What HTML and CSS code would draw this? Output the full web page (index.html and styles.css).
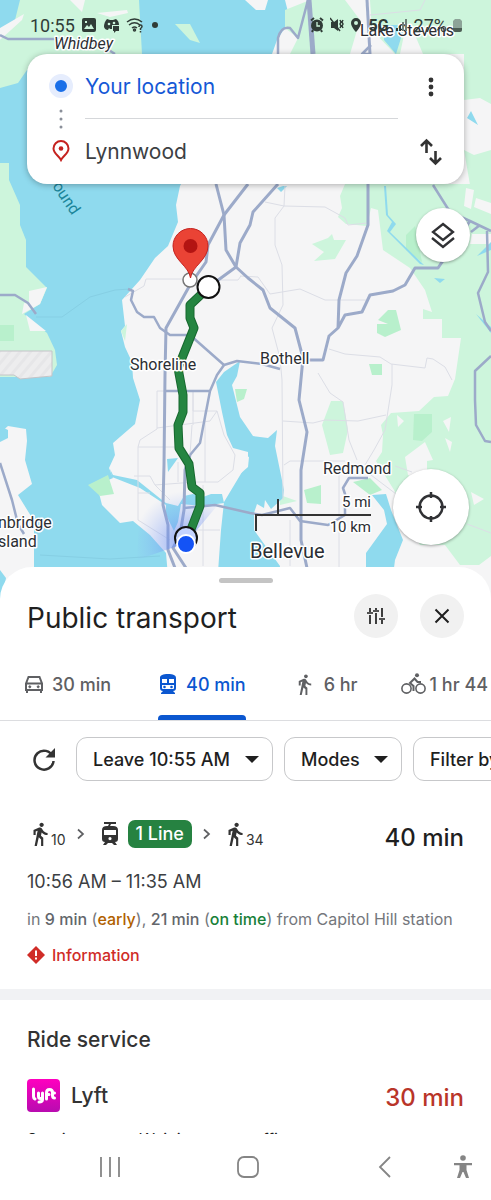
FILE: index.html
```html
<!DOCTYPE html>
<html lang="en">
<head>
  <meta charset="UTF-8" />
  <meta name="viewport" content="width=device-width, initial-scale=1" />
  <title>Directions to Lynnwood</title>
  <link rel="stylesheet" href="styles.css">
</head>
<body>

  <!-- Icons used more than once -->
  <svg class="sprite" aria-hidden="true">
    <symbol id="walk" viewBox="0 0 24 24">
      <path fill="currentColor" d="M13.500 5.500c1.100 0 2-.9 2-2s-.9-2-2-2-2 .9-2 2 .9 2 2 2zM9.800 8.900L7 23h2.100l1.800-8 2.100 2v6h2v-7.500l-2.100-2 .6-3C14.800 12 16.800 13 19 13v-2c-1.900 0-3.500-1-4.300-2.400l-1-1.600c-.4-.6-1-1-1.700-1-.3 0-.5.1-.8.1L6 8.300V13h2V9.600l1.800-.7"/>
    </symbol>
    <symbol id="chevron" viewBox="0 0 10 14">
      <path fill="none" stroke="#5f6063" stroke-width="1.700" d="M2 2.500l5 4.500-5 4.500"/>
    </symbol>
  </svg>

  <div class="app">

    <!-- Map -->
    <section class="map">
      <svg class="map-canvas" viewBox="0 0 491 600" preserveAspectRatio="xMidYMin slice" role="img" aria-label="Map">
        <defs>
          <radialGradient id="beam" gradientUnits="userSpaceOnUse" cx="186" cy="543" r="52">
            <stop offset="0" stop-color="#5b82f2" stop-opacity=".7"/>
            <stop offset="1" stop-color="#8fabf7" stop-opacity="0"/>
          </radialGradient>
          <pattern id="hatch" width="8" height="8" patternUnits="userSpaceOnUse" patternTransform="rotate(40)">
            <rect width="8" height="8" fill="#ededee"/>
            <rect width="3" height="8" fill="#e6e6e8"/>
          </pattern>
        </defs>
        <rect width="491" height="600" fill="#8fdaee"/>

        <!-- Land -->
        <g fill="#f5f5f6">
          <path d="M245 0H268L265 10H256Z"/>
          <path d="M0 433L8 426 26 429 27 441 25 460 32 484 18 495 34 521 34 567 20 575 0 600Z"/>
          <path d="M285 0L290 20 277 40 272 54 250 90 200 150 180 186 176 205 178 222 168 246 155 258 140 280 122 300 125 326 121 331 125 347 132 362 133 378 140 400 135 424 113 443 115 455 109 468 113 478 97 485 102 505 120 523 133 521 150 535 166 553 170 600H491V0Z"/>
        </g>
        <path fill="#8fdaee" d="M0 426L8 430 8 438 0 442ZM110 469L113 475 137 480 162 500 166 503 178 506 184 496 193 494 203 497 211 494 222 494 224 503 203 506 181 504 178 522 174 531 166 515 166 505 140 488 112 477ZM167 459L178 458 168 472Z"/>

        <!-- Parks -->
        <g fill="#cdf5dc">
          <path d="M20 0H139L142 54 100 75 27 70 18 83 0 88V40L14 24Z"/>
          <path d="M0 163H9V180L20 205 20 225 26 240 26 267 47 288 40 304 24 314 47 333 55 350 57 365 50 377H0Z"/>
          <path d="M175 24L190 24 200 43 190 40Z"/>
          <path d="M285 10L310 0H345L360 20 350 54H290L298 38 285 28Z"/>
          <path d="M370 0H491V54H395L372 30Z"/>
          <path d="M464 54H491V185H470L464 150Z"/>
          <path d="M332 184L345 184 340 196 342 208 338 217 346 224 367 226 371 208 378 210 383 250 410 268 425 290 432 312 423 309 423 319 442 319 442 338 461 338 455 379 448 396 434 397 419 411 391 413 381 425 383 435 382 452 376 461 394 490 420 545 445 545 460 565H479L491 556V184Z"/>
          <path d="M312 244L328 238 332 234 334 240 346 240 335 259 314 261 324 252Z"/>
          <path d="M331 401H343L348 430 343 453 330 455 322 425Z"/>
          <path d="M280 495L297 501 280 505ZM121 331L127 324 125 341Z"/>
        </g>
        <g fill="#b8f0cc">
          <path d="M378 320L388 310 396 310 401 330 385 337 377 333V324H388Z"/>
          <path d="M369 364H382V375H372ZM414 414H432V432L422 441 413 440ZM304 490L321 485V504L307 503ZM353 482L370 478 382 490 370 495ZM235 389H247L244 399 237 402ZM88 485L108 475 114 494 100 496ZM406 235L415 226 422 262 406 250ZM0 325H14V341H0Z"/>
        </g>
        <g fill="#f5f5f6">
          <path d="M97 13L127 10 128 13 110 17ZM70 0H85L82 12ZM0 28L24 14 22 20 0 40ZM29 291L47 287 40 304 22 314 24 303 29 304ZM26 315L46 331 30 331Z"/>
          <path d="M466 188L474 190 471 209 464 206ZM476 198L491 203V214L474 207ZM472 234H491V244H470Z"/>
          <path d="M464 100L480 98 491 104V150L474 155 464 150ZM404 35L415 35 423 54H400Z"/>
          <path d="M397 415L404 421 398 427ZM443 421L451 417 449 432ZM405 457L425 442 433 460 427 461V485L408 475ZM445 438L452 442 450 452ZM471 492L484 499 474 505ZM427 368L453 374 450 382Z"/>
        </g>

        <!-- Lakes -->
        <g fill="#8fdaee">
          <path d="M224 372L240 361 237 376 232 385 240 417 253 436 268 438 277 430 275 446 284 490 283 498 271 509 265 500 264 508 257 504 254 513 254 530 280 566 276 600H216L221 530 224 502 248 462 248 452 233 448 227 435 222 412 216 382Z"/>
          <path d="M366 553L387 524 384 510 372 495 386 494 391 510 403 540 395 560 390 600H366Z"/>
          <path d="M384 25H405L396 54 384 40ZM283 186H287L281 192 277 188Z"/>
          <path d="M384 186H386L388 215 396 224 390 232 424 265 420 264 387 231 392 222 386 215Z"/>
          <path d="M434 278L445 279 440 283ZM477 256L491 242V250ZM476 314L491 327V333ZM467 118L471 111 478 125Z"/>
          <path d="M0 570L6 578 2 600H0Z"/>
        </g>
        <path fill="#f5f5f6" d="M240 453L249 457 248 467 240 474Z"/>

        <!-- Airfield -->
        <path fill="url(#hatch)" stroke="#c4c4c8" d="M-2 351H52V376L20 379 14 375-2 375Z"/>

        <!-- Minor roads -->
        <g fill="none" stroke="#dcdee6">
          <path d="M125 297L144 286 146 279H184M200 280H238L241 276"/>
          <path stroke="#86cfe4" d="M36 317H62L90 297 115 290 130 289M40 555L110 559 160 556"/>
          <path d="M285 186L284 206 275 218 275 245 282 265 283 305 272 328 280 358 282 380 283 500M265 202L284 206 325 207 345 218 348 225 367 223M240 276L258 277 270 294 300 289 325 300H366"/>
          <path d="M329 349L345 354 380 357 391 364 425 368 427 358 433 359 445 367 452 380M392 364V385L385 430 374 450 365 465M283 421L313 423 325 420 358 421 386 415M318 373L330 393 343 402 349 440 357 460M284 465L290 461H345M339 470V568M290 520V566M395 466L412 472M371 475L400 497M467 524L491 533"/>
          <path d="M157 391H193V425M157 391V429L140 440 138 447V520L170 540M157 428L210 421 217 411H193V391M138 447H178M217 411L224 435 235 455 233 470 218 482H195L155 485 150 476H134M178 462V482M155 485L170 500M138 493L150 493M192 425L190 455M205 410V482M184 530H220M203 485V566"/>
          <path d="M370 15L420 10 425 0"/>
        </g>

        <!-- Highways -->
        <g fill="none" stroke="#9caac9" stroke-width="2.500" stroke-linejoin="round">
          <path d="M0 35L8 39 60 39 98 43 115 54M0 295H15L28 303 36 314M0 463L12 500 18 524 24 534"/>
          <path d="M308 0L298 38 290 28Q281 26 278 38V54M370 54L362 54 371 45"/>
          <path d="M128 289L133 291 131 300 137 312 144 317H154L160 328 170 335H190L224 365 237 361 262 364 280 369"/>
          <path d="M166 391H210M224 365L217 375 210 391 200 443 190 455"/>
          <path d="M184 508L215 505 250 513 262 515 290 508 300 521 328 525 345 515V494L343 488 349 478H368"/>
          <path d="M433 185L450 212 470 221 491 231M487 231L488 272 478 293 485 322 491 331M491 356L475 371V400L476 425 485 441 491 442M471 232L480 225"/>
        </g>
        <g fill="none" stroke="#9caac9" stroke-width="3" stroke-linejoin="round">
          <path stroke-width="5" d="M309 0L313 54"/>
          <path d="M367 0L370 54"/>
          <path d="M216 184L224 215 226 250 236 267 248 278 263 290 270 308 295 328 303 358 299 400 307 432 301 470V540L307 568"/>
          <path d="M248 184L224 215 208 245 206 262 190 285 166 328 165 375 164 465 163 505 168 525V550L175 568M278 184L253 212 250 225 240 243 236 267 210 286"/>
          <path d="M368 184V225L357 256 346 273 339 300 338 328 329 336 323 360H303M338 328L345 315 362 312 370 295 393 291 405 285 415 268H438L470 221"/>
          <path d="M190 455L185 470 184 510 180 535 173 548 186 568"/>
        </g>

        <!-- Route -->
        <path fill="url(#beam)" d="M186 543L137 560 140 500 170 485 222 500Z"/>
        <g fill="none" stroke-linejoin="round">
          <path stroke="#17682f" stroke-width="9" d="M208 288L190 305V318L194 328 178 368 183 395V412L178 425 179 448 189 464 192 487 200 493V506L190 532"/>
          <path stroke="#258541" stroke-width="7" d="M208 288L190 305V318L194 328 178 368 183 395V412L178 425 179 448 189 464 192 487 200 493V506L190 532"/>
        </g>
        <circle cx="186" cy="538" r="11" fill="#c5d4ff" stroke="#111" stroke-width="2"/>
        <circle cx="186" cy="544" r="9" fill="#1453f5" stroke="#fff" stroke-width="2"/>
        <circle cx="190" cy="280" r="7" fill="#fff" stroke="#777" stroke-width="1.500"/>
        <circle cx="208.500" cy="287" r="11" fill="#fff" stroke="#111" stroke-width="2"/>
        <path fill="#ea4335" stroke="#c5221f" d="M190.500 278C189 266 173 260 173 246a17.500 17.500 0 0 1 35 0C208 260 192 266 190.500 278Z"/>
        <circle cx="190.500" cy="246" r="7" fill="#b31412"/>

        <g class="map-labels">
          <text class="label-italic" x="54" y="49">Whidbey</text>
          <text x="360" y="36">Lake Stevens</text>
          <text x="130" y="370">Shoreline</text>
          <text x="260" y="364">Bothell</text>
          <text x="323" y="474">Redmond</text>
          <text class="label-city" x="250" y="558">Bellevue</text>
          <text x="-2" y="528">nbridge</text>
          <text x="-2" y="547">sland</text>
          <text class="label-scale" x="371" y="507" text-anchor="end">5 mi</text>
          <text class="label-scale" x="371" y="532" text-anchor="end">10 km</text>
        </g>
        <text class="label-water" transform="translate(52 186) rotate(56)">ound</text>

        <!-- Scale -->
        <path fill="none" stroke="#333" stroke-width="2" d="M256 531V515H371M278 515V499"/>
      </svg>

      <div class="status">
        <div class="status-group">
          <span>10:55</span>
          <svg width="16" height="16" viewBox="0 0 16 16"><path fill="#303c37" fill-rule="evenodd" d="M3 1h10a2 2 0 0 1 2 2v10a2 2 0 0 1-2 2H3a2 2 0 0 1-2-2V3a2 2 0 0 1 2-2ZM3 12h10L10 7 8 10 6 8ZM4 4v2h2V4Z"/></svg>
          <svg width="17" height="16" viewBox="0 0 17 16"><path fill="#303c37" d="M4 2l3 1h3l3-1q3 2 3 6H9v4H7l-1-1-1 2q-3 0-4-3Q1 5 4 2ZM10 9h6v5h-3l-2 2v-2h-1Z"/><circle cx="6" cy="7" r="1.300" fill="#cdf5dc"/><circle cx="11" cy="6" r="1.300" fill="#cdf5dc"/></svg>
          <svg width="18" height="16" viewBox="0 0 18 16" fill="none" stroke="#303c37" stroke-width="1.500"><path d="M1 5Q8.500-1 16 5M3 8q5.500-4.500 11 0M6 11q2.500-2 5 0M13 10q0-2 1.500-2T16 9.500q0 1-1.500 2V13M14.500 14v1.500"/><circle cx="8.500" cy="13" r="1"/></svg>
          <span class="status-dot"></span>
        </div>
        <div class="status-group">
          <svg width="14" height="16" viewBox="0 0 14 16"><circle cx="7" cy="8.500" r="6" fill="#303c37"/><path stroke="#303c37" stroke-width="2" d="M1 3.500L4 1M13 3.500L10 1M3 13l-1 2M11 13l1 2"/><path fill="none" stroke="#cdf5dc" stroke-width="1.300" d="M7 5v4h3"/></svg>
          <svg width="14" height="16" viewBox="0 0 14 16"><path fill="#303c37" d="M1 5h3l4-3v12l-4-3H1Z"/><path fill="none" stroke="#303c37" stroke-width="1.500" d="M0 1l10 13M10 3l1 2-1 2 1 2-1 2M13 3l-1 2 1 2-1 2 1 2"/></svg>
          <svg width="12" height="16" viewBox="0 0 12 16"><path fill="#303c37" fill-rule="evenodd" d="M6 1a5 5 0 0 1 5 5c0 4-5 9-5 9S1 10 1 6a5 5 0 0 1 5-5Zm0 3a2 2 0 1 0 0 4 2 2 0 0 0 0-4Z"/></svg>
          <span class="network">5G</span>
          <svg width="13" height="14" viewBox="0 0 13 14"><path stroke="#303c37" stroke-width="2" d="M2 10v3M5 8v5"/><path stroke="#6f8078" stroke-width="2" d="M8 4v9M11 1v12"/></svg>
          <span>27%</span>
          <svg width="9" height="14" viewBox="0 0 9 14"><path fill="#8da398" d="M2 1h5l2 2v8H0V3Z"/><path fill="#4c5d54" d="M0 10h9v2q0 2-2 2H2q-2 0-2-2Z"/></svg>
        </div>
      </div>

      <form class="search">
        <div class="search-marks">
          <span class="origin-mark"></span>
          <svg width="4" height="20" viewBox="0 0 4 20" fill="#8a8f99"><circle cx="2" cy="2" r="1.500"/><circle cx="2" cy="10" r="1.500"/><circle cx="2" cy="18" r="1.500"/></svg>
          <svg width="18" height="22" viewBox="0 0 18 22"><path fill="none" stroke="#c5221f" stroke-width="2" d="M9 20C7 16 1.500 13.500 1.500 8.500a7.500 7.500 0 0 1 15 0C16.500 13.500 11 16 9 20Z"/><circle cx="9" cy="8.500" r="2.300" fill="#c5221f"/></svg>
        </div>
        <div class="search-fields">
          <input class="origin" type="text" value="Your location" aria-label="Starting point">
          <hr>
          <input type="text" value="Lynnwood" aria-label="Destination">
        </div>
        <div class="search-actions">
          <button type="button" aria-label="More options">
            <svg width="24" height="24" viewBox="0 0 24 24" fill="#333"><circle cx="12" cy="5" r="2.400"/><circle cx="12" cy="12" r="2.400"/><circle cx="12" cy="19" r="2.400"/></svg>
          </button>
          <button type="button" aria-label="Swap start and destination">
            <svg width="24" height="28" viewBox="0 0 24 28" fill="none" stroke="#333" stroke-width="2.600"><path d="M7.500 15V3M2 8l5.500-5.500L13 8M16.500 13v12M11 20l5.500 5.500L22 20"/></svg>
          </button>
        </div>
      </form>

      <button class="round layers" type="button" aria-label="Layers">
        <svg width="26" height="28" viewBox="0 0 26 28" fill="none" stroke="#303134" stroke-width="2.300"><path d="M13 3l10 8-10 8-10-8ZM2 17l11 9 11-9"/></svg>
      </button>
      <button class="round locate" type="button" aria-label="Centre on my location">
        <svg width="32" height="32" viewBox="0 0 32 32" fill="none" stroke="#303134" stroke-width="2.500"><circle cx="16" cy="16" r="11.500"/><path d="M16 1v6M16 25v6M1 16h6M25 16h6"/></svg>
      </button>
    </section>

    <!-- Bottom sheet -->
    <main class="sheet">
      <div class="handle"></div>
      <header class="sheet-header">
        <h1>Public transport</h1>
        <button class="chip-round" type="button" aria-label="Route options">
          <svg width="20" height="20" viewBox="0 0 20 20" fill="none" stroke="#1f1f1f" stroke-width="1.700"><path d="M4 2v4M1 7h6M4 9v9M10 2v2M7 5h6M10 7v11M16 2v9M13 13h6M16 14v4"/></svg>
        </button>
        <button class="chip-round" type="button" aria-label="Close">
          <svg width="18" height="18" viewBox="0 0 18 18" fill="none" stroke="#1f1f1f" stroke-width="2"><path d="M2.500 2.500l13 13M15.500 2.500l-13 13"/></svg>
        </button>
      </header>

      <nav class="tabs">
        <button type="button">
          <svg width="20" height="20" viewBox="0 0 20 20" fill="none" stroke="currentColor" stroke-width="2"><path d="M2 9.500L4.500 3h11L18 9.500V16H2ZM2 9.500h16M3 16v3M17 16v3"/><circle cx="5.800" cy="12.800" r="1" fill="currentColor" stroke-width="1"/><circle cx="14.200" cy="12.800" r="1" fill="currentColor" stroke-width="1"/></svg>
          30 min
        </button>
        <button class="active" type="button">
          <svg width="20" height="20" viewBox="0 0 20 20"><path fill="currentColor" fill-rule="evenodd" d="M10 0c5 0 8 1 8 4v10q0 3-3 3l2 2v1H3v-1l2-2q-3 0-3-3V4c0-3 3-4 8-4ZM4 5v4h5V5Zm7 0v4h5V5ZM4 11v3q0 1 1 1h10q1 0 1-1v-3Z"/><circle cx="6.500" cy="13" r="1.300" fill="currentColor"/><circle cx="13.500" cy="13" r="1.300" fill="currentColor"/></svg>
          40 min
        </button>
        <button type="button">
          <svg width="23" height="23"><use href="#walk"/></svg>
          6 hr
        </button>
        <button class="bike" type="button">
          <svg width="25" height="22" viewBox="0 0 25 22" fill="none" stroke="currentColor" stroke-width="1.600"><circle cx="5.500" cy="15.500" r="4.600"/><circle cx="19.500" cy="15.500" r="4.600"/><circle cx="16" cy="2.200" r="2" fill="currentColor" stroke="none"/><path stroke-width="2" d="M12.500 18v-5L9 10l4.500-4.500 3 3.500H20"/></svg>
          1 hr 44
        </button>
      </nav>

      <div class="filters">
        <button class="refresh" type="button" aria-label="Refresh">
          <svg width="24" height="24" viewBox="0 0 24 24"><path fill="none" stroke="#333" stroke-width="2.500" d="M20.800 9.500A9.500 9.500 0 1 0 21.500 14"/><path fill="#333" d="M23 1v9.500h-9.500Z"/></svg>
        </button>
        <label class="filter"><select aria-label="Departure time"><option>Leave 10:55 AM</option></select></label>
        <label class="filter"><select aria-label="Modes"><option>Modes</option></select></label>
        <label class="filter"><select aria-label="Filter by"><option>Filter by</option></select></label>
      </div>

      <article class="trip">
        <div class="trip-top">
          <div class="legs">
            <span class="leg"><svg width="26" height="26"><use href="#walk"/></svg><small>10</small></span>
            <svg width="10" height="14"><use href="#chevron"/></svg>
            <svg class="tram" width="20" height="26" viewBox="0 0 20 26"><path fill="#333" fill-rule="evenodd" d="M4 1h12v2h-5l-1 2h3q5 0 5 4v9q0 3-3 3l2 3h-3l-2-2H8l-2 2H3l2-3q-3 0-3-3V9q0-4 5-4h1l1-2H4ZM4 9v5h12V9Zm6 7a1.600 1.600 0 1 0 0 3.200 1.600 1.600 0 0 0 0-3.200Z"/></svg>
            <span class="line">1 Line</span>
            <svg width="10" height="14"><use href="#chevron"/></svg>
            <span class="leg"><svg width="26" height="26"><use href="#walk"/></svg><small>34</small></span>
          </div>
          <strong class="duration">40 min</strong>
        </div>
        <p class="times">10:56 AM – 11:35 AM</p>
        <p class="departures">in <b>9 min</b> (<b class="early">early</b>), <b>21 min</b> (<b class="on-time">on time</b>) from Capitol Hill station</p>
        <a class="info" href="#">
          <svg width="18" height="18" viewBox="0 0 18 18"><path fill="#d02c27" d="M9 0l9 9-9 9-9-9Z"/><path stroke="#fff" stroke-width="2" d="M9 4.500v5.500M9 11.500v2"/></svg>
          Information
        </a>
      </article>

      <section class="rides">
        <h2>Ride service</h2>
        <div class="ride">
          <svg width="33" height="33" viewBox="0 0 33 33">
            <defs><linearGradient id="pink" x2="0" y2="1"><stop stop-color="#ff00bf"/><stop offset="1" stop-color="#b80bb0"/></linearGradient></defs>
            <rect width="33" height="33" rx="4" fill="url(#pink)"/>
            <g fill="none" stroke="#fff" stroke-width="3" stroke-linecap="round"><path d="M6.500 10v7q0 2.500 1.500 3M11.500 14v3.500q0 2 2 2t2-2V14M15.500 17v3.500q0 2.500-3.500 2.500M19.500 20v-6q0-3.500 3-3.500t3 3v3q0 2.500 2 2.500M20 15.500h2M25.500 14h2"/></g>
          </svg>
          <span class="ride-name">Lyft</span>
          <strong class="duration late">30 min</strong>
        </div>
        <p class="ride-note">Service zone · Wait in or near office</p>
      </section>
    </main>

    <!-- System navigation -->
    <footer class="system-nav">
      <button type="button" aria-label="Recent apps"><svg width="24" height="24" viewBox="0 0 24 24"><path stroke="#858585" stroke-width="1.800" d="M3 2v20M12 2v20M21 2v20"/></svg></button>
      <button type="button" aria-label="Home"><svg width="24" height="24" viewBox="0 0 24 24"><rect x="2" y="2" width="20" height="20" rx="6" fill="none" stroke="#858585" stroke-width="1.800"/></svg></button>
      <button type="button" aria-label="Back"><svg width="24" height="24" viewBox="0 0 24 24"><path fill="none" stroke="#858585" stroke-width="1.800" d="M17 2L7 12l10 10"/></svg></button>
      <button class="access" type="button" aria-label="Accessibility"><svg width="24" height="24" viewBox="0 0 24 24" fill="#858585"><circle cx="12" cy="3" r="2.800"/><path d="M3 8h18v2.200h-5.500V15L18 23h-3l-2.500-6h-1L9 23H6l2.500-8v-4.800H3Z"/></svg></button>
    </footer>
  </div>

</body>
</html>
```
FILE: styles.css
```css
* {
  box-sizing: border-box;
}

body {
  margin: 0;
  font-family: Inter, "Open Sans", sans-serif;
  color: #1f1f1f;
  background-color: #fff;
}

button,
input,
select {
  font: inherit;
  color: inherit;
  background: none;
  border: none;
  padding: 0;
  margin: 0;
}

button {
  display: flex;
  align-items: center;
  justify-content: center;
  cursor: pointer;
}

svg {
  display: block;
  flex-shrink: 0;
}

.sprite {
  position: absolute;
  width: 0;
  height: 0;
}

.app {
  display: flex;
  flex-direction: column;
  height: 100vh;
  overflow: hidden;
}

/* Map */
.map {
  position: relative;
  flex: 0 0 50vh;
  overflow: hidden;
}

.map-canvas {
  position: absolute;
  inset: 0;
  width: 100%;
  height: 100%;
}

.map-labels,
.label-water {
  font-family: Roboto, sans-serif;
  font-size: 16px;
}

.map-labels {
  fill: #2b2e33;
  stroke: #fff;
  stroke-width: 3px;
  stroke-linejoin: round;
  paint-order: stroke;
}

.label-italic {
  font-style: italic;
}

.label-city {
  font-size: 20px;
}

.label-scale {
  font-size: 15px;
}

.label-water {
  fill: #1b8599;
}

.status {
  position: relative;
  display: flex;
  justify-content: space-between;
  align-items: center;
  height: 54px;
  padding: 0 29px 4px 30px;
  font-family: Roboto, sans-serif;
  font-size: 18px;
  color: #303c37;
}

.status-group {
  display: flex;
  align-items: center;
  gap: 6px;
}

.status-dot {
  width: 6px;
  height: 6px;
  margin-left: 2px;
  border-radius: 50%;
  background-color: #303c37;
}

.network {
  font-size: 16px;
  font-weight: 700;
}

.search {
  position: relative;
  display: flex;
  margin: 0 27px;
  height: 130px;
  border-radius: 20px;
  background-color: #fff;
  box-shadow: 0 1px 6px rgba(0, 0, 0, 0.3);
}

.search-marks {
  display: flex;
  flex-direction: column;
  align-items: center;
  justify-content: space-between;
  width: 24px;
  margin-left: 22px;
  padding: 20px 0 22px;
}

.origin-mark {
  width: 24px;
  height: 24px;
  border: 6px solid #e6edfd;
  border-radius: 50%;
  background-color: #1a6fe8;
}

.search-fields {
  display: flex;
  flex-direction: column;
  flex: 1;
  min-width: 0;
  margin-left: 12px;
  font-size: 21px;
  color: #3c4043;
}

.search-fields input {
  width: 100%;
  height: 64px;
}

.search-fields .origin {
  color: #1558d6;
}

.search-fields hr {
  width: 100%;
  margin: 0;
  border: none;
  border-top: 1px solid #d5d7da;
}

.search-actions {
  display: flex;
  flex-direction: column;
  width: 66px;
}

.search-actions button {
  flex: 1;
}

.round {
  position: absolute;
  border-radius: 50%;
  background-color: #fff;
  box-shadow: 0 1px 3px rgba(0, 0, 0, 0.35);
}

.layers {
  top: 208px;
  right: 21px;
  width: 54px;
  height: 54px;
}

.locate {
  right: 22px;
  bottom: 55px;
  width: 76px;
  height: 76px;
}

/* Sheet */
.sheet {
  position: relative;
  flex: 1;
  min-height: 0;
  margin-top: -33px;
  overflow: hidden;
  border-radius: 32px 32px 0 0;
  background-color: #fff;
}

.handle {
  width: 54px;
  height: 5px;
  margin: 11px auto;
  border-radius: 3px;
  background-color: #c4c4c4;
}

.sheet-header {
  display: flex;
  align-items: center;
  gap: 22px;
  padding: 0 27px;
}

h1 {
  flex: 1;
  margin: 0;
  padding-top: 4px;
  font-size: 28px;
  font-weight: 400;
}

.chip-round {
  width: 44px;
  height: 44px;
  border-radius: 50%;
  background-color: #f1f1f1;
}

.tabs {
  display: flex;
  gap: 47px;
  padding-left: 24px;
  border-bottom: 1px solid #dcdde0;
}

.tabs button {
  position: relative;
  flex-shrink: 0;
  gap: 8px;
  height: 82px;
  padding-top: 10px;
  font-size: 18px;
  font-weight: 500;
  color: #5f6063;
}

.tabs .bike {
  gap: 4px;
  margin-left: -4px;
}

.tabs .active {
  color: #0b57d0;
}

.tabs .active::after {
  content: "";
  position: absolute;
  left: 0;
  right: 0;
  bottom: 0;
  height: 5px;
  border-radius: 4px 4px 0 0;
  background-color: #0b57d0;
}

.filters {
  display: flex;
  gap: 11px;
  padding: 16px 0 0 27px;
}

.refresh {
  flex-shrink: 0;
  width: 34px;
  margin-right: 4px;
}

.filter {
  position: relative;
  flex-shrink: 0;
}

.filter select {
  height: 44px;
  padding: 0 41px 0 16px;
  border: 1px solid #c7c8ca;
  border-radius: 11px;
  font-size: 18px;
  font-weight: 500;
  appearance: none;
}

.filter::after {
  content: "";
  position: absolute;
  top: 19px;
  right: 14px;
  border: 7px solid transparent;
  border-top-color: #1f1f1f;
  border-bottom: none;
}

.trip {
  padding: 36px 27px 24px;
  border-bottom: 11px solid #f1f2f4;
}

.trip-top {
  display: flex;
  justify-content: space-between;
  align-items: center;
  height: 36px;
}

.legs {
  display: flex;
  align-items: center;
  gap: 10px;
  padding-bottom: 2px;
  color: #333;
}

.leg {
  display: flex;
  align-items: flex-end;
}

.leg small {
  margin-left: -2px;
  font-size: 14px;
  line-height: 14px;
}

.tram {
  margin-left: 4px;
  margin-right: -2px;
}

.line {
  padding: 0 8px;
  border-radius: 7px;
  font-size: 18px;
  font-weight: 500;
  line-height: 28px;
  color: #fff;
  background-color: #268241;
}

.duration {
  padding-top: 4px;
  font-size: 24px;
  font-weight: 500;
}

.late {
  color: #b93529;
}

.times {
  margin: 17px 0 0;
  font-size: 18px;
  line-height: 24px;
  color: #3c4043;
}

.departures {
  margin: 15px 0 0;
  font-size: 16px;
  line-height: 20px;
  color: #74777c;
  white-space: nowrap;
}

.departures b {
  font-weight: 500;
  color: #63666b;
}

.departures .early {
  color: #b06000;
}

.departures .on-time {
  color: #188038;
}

.info {
  display: flex;
  align-items: center;
  gap: 7px;
  margin-top: 16px;
  font-size: 16px;
  font-weight: 500;
  line-height: 20px;
  color: #d02c27;
  text-decoration: none;
}

.rides {
  padding: 27px 27px 0;
}

h2 {
  margin: 0;
  font-size: 21px;
  font-weight: 500;
  line-height: 26px;
  color: #333;
}

.ride {
  display: flex;
  align-items: center;
  gap: 11px;
  height: 33px;
  margin-top: 26px;
}

.ride-name {
  flex: 1;
  font-size: 21px;
  font-weight: 500;
  color: #333;
}

.ride-note {
  margin: 17px 0 0;
  font-size: 16px;
  line-height: 20px;
}

/* System navigation */
.system-nav {
  position: relative;
  display: flex;
  flex: 0 0 66px;
  justify-content: space-between;
  padding: 0 94px 0 98px;
  background-color: #fff;
}

.access {
  position: absolute;
  top: 0;
  right: 16px;
  height: 100%;
}
```
